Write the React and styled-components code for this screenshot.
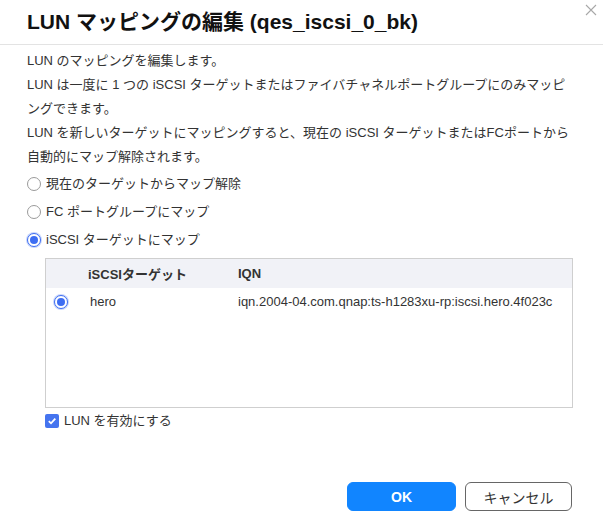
import styled, { createGlobalStyle } from "styled-components";

const font = `"Liberation Sans", "Noto Sans CJK JP", sans-serif`;

const Global = createGlobalStyle`
  html, body {
    margin: 0;
    padding: 0;
    background: #fff;
  }
  body {
    font-family: ${font};
    color: #333;
  }
`;

const Dialog = styled.div`
  width: 603px;
  height: 531px;
  box-sizing: border-box;
  position: relative;
  display: flex;
  flex-direction: column;
`;

const Header = styled.div`
  height: 45px;
  box-sizing: border-box;
  padding: 7px 27px 0;
  border-bottom: 1px solid #e3e3e3;
`;

const Title = styled.h1`
  margin: 0;
  font-size: 21px;
  font-weight: 700;
  color: #111;
  line-height: 29px;
`;

const Close = styled.button`
  position: absolute;
  top: 4px;
  right: 5px;
  width: 14px;
  height: 14px;
  border: none;
  background: none;
  padding: 0;
`;

const Body = styled.div`
  padding: 4px 27px 0;
  flex: 1;
`;

const Text = styled.p`
  margin: 0;
  font-size: 13px;
  line-height: 24px;
  color: #333;
  width: 548px;
`;

const Options = styled.div`
  display: flex;
  flex-direction: column;
  gap: 8px;
  margin-top: 5px;
`;

const Option = styled.label`
  display: flex;
  align-items: center;
  gap: 5px;
  font-size: 13px;
  line-height: 20px;
  color: #333;
`;

const Radio = styled.span`
  width: 14px;
  height: 14px;
  box-sizing: border-box;
  border-radius: 50%;
  border: 1px solid ${(p) => (p.$on ? "#3d6df2" : "#9a9a9a")};
  display: inline-flex;
  align-items: center;
  justify-content: center;
  background: #fff;
  box-shadow: ${(p) => (p.$on ? "0 0 0 1px #c8d6fb" : "none")};
  &::after {
    content: "";
    width: 8px;
    height: 8px;
    border-radius: 50%;
    background: ${(p) => (p.$on ? "#3d6df2" : "transparent")};
  }
`;

const Table = styled.div`
  margin: 8px 0 0 18px;
  width: 528px;
  height: 150px;
  box-sizing: border-box;
  border: 1px solid #cfcfcf;
`;

const Row = styled.div`
  display: grid;
  grid-template-columns: 42px 150px 1fr;
  align-items: center;
  height: ${(p) => (p.$head ? "29px" : "27px")};
  background: ${(p) => (p.$head ? "#f1f2f7" : "#fff")};
  font-size: 13px;
  font-weight: ${(p) => (p.$head ? 700 : 400)};
  color: #333;
`;

const Cell = styled.div`
  padding-left: ${(p) => p.$pad || 0}px;
  display: flex;
  align-items: center;
`;

const Check = styled.label`
  display: flex;
  align-items: center;
  gap: 5px;
  margin: 3px 0 0 18px;
  font-size: 13px;
  line-height: 20px;
  color: #333;
`;

const Box = styled.span`
  width: 14px;
  height: 14px;
  border-radius: 2px;
  background: #4574ef;
  display: inline-flex;
  align-items: center;
  justify-content: center;
`;

const Footer = styled.div`
  display: flex;
  justify-content: flex-end;
  gap: 9px;
  padding: 0 31px 20px 0;
`;

const Button = styled.button`
  width: ${(p) => (p.$primary ? "109px" : "107px")};
  height: 29px;
  box-sizing: border-box;
  border-radius: 6px;
  border: 1px solid ${(p) => (p.$primary ? "#1185ff" : "#666")};
  background: ${(p) => (p.$primary ? "#1185ff" : "#fff")};
  color: ${(p) => (p.$primary ? "#fff" : "#333")};
  font-family: ${font};
  font-size: 14px;
  font-weight: ${(p) => (p.$primary ? 700 : 400)};
  padding: 0;
`;

export default function App() {
  return (
    <>
      <Global />
      <Dialog>
        <Header>
          <Title>LUN マッピングの編集 (qes_iscsi_0_bk)</Title>
        </Header>
        <Close aria-label="close">
          <svg width="12" height="12" viewBox="0 0 12 12">
            <path d="M1 1 L11 11 M11 1 L1 11" stroke="#a8a8a8" strokeWidth="1.1" fill="none" />
          </svg>
        </Close>
        <Body>
          <Text>LUN のマッピングを編集します。</Text>
          <Text>
            LUN は一度に 1 つの iSCSI ターゲットまたはファイバチャネルポートグループにのみマッピ
            <br />
            ングできます。
          </Text>
          <Text>
            LUN を新しいターゲットにマッピングすると、現在の iSCSI ターゲットまたはFCポートから
            <br />
            自動的にマップ解除されます。
          </Text>
          <Options>
            <Option>
              <Radio />
              現在のターゲットからマップ解除
            </Option>
            <Option>
              <Radio />
              FC ポートグループにマップ
            </Option>
            <Option>
              <Radio $on />
              iSCSI ターゲットにマップ
            </Option>
          </Options>
          <Table>
            <Row $head>
              <Cell />
              <Cell>iSCSIターゲット</Cell>
              <Cell>IQN</Cell>
            </Row>
            <Row>
              <Cell $pad={8}>
                <Radio $on />
              </Cell>
              <Cell $pad={2}>hero</Cell>
              <Cell>iqn.2004-04.com.qnap:ts-h1283xu-rp:iscsi.hero.4f023c</Cell>
            </Row>
          </Table>
          <Check>
            <Box>
              <svg width="10" height="10" viewBox="0 0 10 10">
                <path d="M1.8 5.2 L4 7.3 L8.3 2.6" stroke="#fff" strokeWidth="1.8" fill="none" />
              </svg>
            </Box>
            LUN を有効にする
          </Check>
        </Body>
        <Footer>
          <Button $primary>OK</Button>
          <Button>キャンセル</Button>
        </Footer>
      </Dialog>
    </>
  );
}
